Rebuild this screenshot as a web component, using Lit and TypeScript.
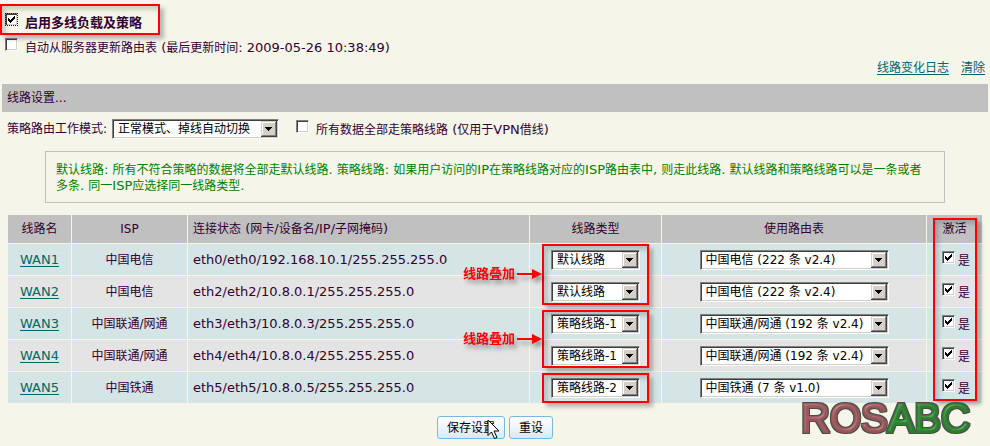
import { LitElement, html, css, svg } from "lit";
import { customElement, property } from "lit/decorators.js";

interface Route {
  name: string;
  isp: string;
  status: string;
  type: string;
  table: string;
}

const ROUTES: Route[] = [
  { name: "WAN1", isp: "中国电信", status: "eth0/eth0/192.168.10.1/255.255.255.0", type: "默认线路", table: "中国电信 (222 条 v2.4)" },
  { name: "WAN2", isp: "中国电信", status: "eth2/eth2/10.8.0.1/255.255.255.0", type: "默认线路", table: "中国电信 (222 条 v2.4)" },
  { name: "WAN3", isp: "中国联通/网通", status: "eth3/eth3/10.8.0.3/255.255.255.0", type: "策略线路-1", table: "中国联通/网通 (192 条 v2.4)" },
  { name: "WAN4", isp: "中国联通/网通", status: "eth4/eth4/10.8.0.4/255.255.255.0", type: "策略线路-1", table: "中国联通/网通 (192 条 v2.4)" },
  { name: "WAN5", isp: "中国铁通", status: "eth5/eth5/10.8.0.5/255.255.255.0", type: "策略线路-2", table: "中国铁通 (7 条 v1.0)" },
];

const TYPES = ["默认线路", "策略线路-1", "策略线路-2"];
const TABLES = ["中国电信 (222 条 v2.4)", "中国联通/网通 (192 条 v2.4)", "中国铁通 (7 条 v1.0)"];

// Latin runs are set one pixel larger than the Chinese text around them.
const mixed = (text: string) =>
  text.split(/([\x20-\x7e]+)/).map((part, i) => (i % 2 ? html`<span class="latin">${part}</span>` : part));

@customElement("classic-select")
export class ClassicSelect extends LitElement {
  @property({ type: Array }) options: string[] = [];
  @property() value = "";
  @property() label = "";

  static styles = css`
    :host {
      display: inline-block;
      position: relative;
      height: 20px;
      vertical-align: middle;
    }
    .field {
      display: block;
      box-sizing: border-box;
      width: 100%;
      height: 20px;
      margin: 0;
      padding: 0 18px 0 5px;
      appearance: none;
      border: 1px solid;
      border-color: #808080 #fff #fff #808080;
      border-radius: 0;
      box-shadow: inset 1px 1px #404040, inset -1px -1px #d4d0c8;
      background: #fff;
      color: #000;
      font: 12px/18px "DejaVu Sans", "Noto Sans CJK SC", sans-serif;
    }
    .arrow {
      position: absolute;
      top: 2px;
      right: 2px;
      width: 16px;
      height: 16px;
      pointer-events: none;
    }
  `;

  render() {
    return html`
      <select class="field" aria-label=${this.label}>
        ${this.options.map((o) => html`<option ?selected=${o === this.value}>${o}</option>`)}
      </select>
      <svg class="arrow" viewBox="0 0 16 16" shape-rendering="crispEdges" aria-hidden="true">
        <rect width="16" height="16" fill="#404040" />
        <rect width="15" height="15" fill="#d4d0c8" />
        <rect x="1" y="1" width="14" height="14" fill="#808080" />
        <rect x="1" y="1" width="13" height="13" fill="#fff" />
        <rect x="2" y="2" width="12" height="12" fill="#d4d0c8" />
        <path d="M4 6h7v1h-1v1h-1v1h-1v1h-1v-1h-1v-1h-1v-1h-1z" fill="#000" />
      </svg>
    `;
  }
}

@customElement("classic-check")
export class ClassicCheck extends LitElement {
  @property({ type: Boolean }) checked = false;
  @property({ type: Boolean }) focusmark = false;

  static styles = css`
    :host {
      display: inline-block;
    }
    .row {
      display: flex;
      gap: var(--check-gap, 7px);
    }
    .box {
      position: relative;
      width: 13px;
      height: 13px;
      flex: none;
    }
    .input {
      display: block;
      box-sizing: border-box;
      width: 13px;
      height: 13px;
      margin: 0;
      appearance: none;
      border: 1px solid;
      border-color: #808080 #fff #fff #808080;
      box-shadow: inset 1px 1px #404040, inset -1px -1px #d4d0c8;
      background: #fff;
    }
    .focus {
      outline: 1px dotted #330033;
      outline-offset: -1px;
    }
    .tick {
      position: absolute;
      inset: 0;
      visibility: hidden;
      pointer-events: none;
    }
    .input:checked + .tick {
      visibility: visible;
    }
    .text {
      padding-top: 2px;
      line-height: 16px;
    }
  `;

  render() {
    return html`
      <label class="row">
        <span class="box">
          <input class="input ${this.focusmark ? "focus" : ""}" type="checkbox" ?checked=${this.checked} />
          <svg class="tick" width="13" height="13" viewBox="0 0 13 13" shape-rendering="crispEdges" aria-hidden="true">
            <path d="M3 5h1v1h1v1h1v-1h1v-1h1v-1h1v-1h1v3h-1v1h-1v1h-1v1h-1v1h-1v-1h-1v-1h-1z" fill="#000" />
          </svg>
        </span>
        <span class="text"><slot></slot></span>
      </label>
    `;
  }
}

@customElement("app-root")
export class AppRoot extends LitElement {
  static styles = css`
    :host {
      display: block;
      position: relative;
      min-height: 100vh;
      box-sizing: border-box;
      background: #f6f5e9;
      color: #330033;
      font: 12px/16px "DejaVu Sans", "Noto Sans CJK SC", sans-serif;
      overflow: hidden;
    }
    .latin {
      font-size: 13px;
    }
    .link {
      color: #006666;
      text-decoration: underline;
      text-underline-offset: 2px;
    }
    .switches {
      display: flex;
      flex-direction: column;
      align-items: flex-start;
      gap: 7px;
      padding: 13px 5px 0;
    }
    .main-switch {
      font-weight: bold;
      height: 18px;
      font-size: 13px;
    }
    .actions {
      display: flex;
      justify-content: flex-end;
      gap: 12px;
      padding: 4px 5px 8px;
    }
    .heading {
      margin: 0 2px;
      padding: 0 5px;
      background: #c0c0c0;
      font-size: 12px;
      font-weight: normal;
      line-height: 28px;
    }
    .mode {
      display: flex;
      align-items: center;
      padding: 7px 7px 0;
    }
    .mode-label {
      width: 105px;
      white-space: nowrap;
    }
    .mode-select {
      width: 167px;
      margin-right: 17px;
    }
    .help {
      margin: 12px 45px 11px;
      padding: 10px 18px 8px 10px;
      border: 1px solid #c0c0c0;
      color: #008000;
      line-height: 15px;
    }
    .routes {
      position: relative;
      margin: 0 7px;
    }
    .table {
      width: 100%;
      table-layout: fixed;
      border-collapse: separate;
      border-spacing: 1px;
    }
    .col-name { width: 63px; }
    .col-isp { width: 115px; }
    .col-type { width: 131px; }
    .col-table { width: 264px; }
    .col-active { width: 55px; }
    .th {
      height: 28px;
      padding: 0;
      background: #c0c0c0;
      font-weight: normal;
      text-align: center;
    }
    .td {
      height: 31px;
      padding: 0;
      background: #d5e5e5;
      text-align: center;
      white-space: nowrap;
    }
    .tr:nth-child(even) .td {
      background: #e5e4e5;
    }
    .td.status, .th.status {
      padding-left: 5px;
      text-align: left;
    }
    .td.activate {
      padding-left: 3px;
    }
    .type-select {
      width: 89px;
    }
    .table-select {
      width: 189px;
    }
    .active {
      --check-gap: 3px;
      vertical-align: middle;
    }
    .buttons {
      display: flex;
      justify-content: center;
      gap: 4px;
      padding: 12px 0 7px;
    }
    .button {
      position: relative;
      height: 23px;
      padding: 0 9px;
      border: 1px solid #7ab8dc;
      border-radius: 3px;
      background: linear-gradient(#fff, #eef6ff 45%, #d3e9ff);
      color: #000;
      font: 12px/20px "DejaVu Sans", "Noto Sans CJK SC", sans-serif;
    }
    .cursor {
      position: absolute;
      left: 49px;
      top: 2px;
    }
    .mark {
      position: absolute;
      box-sizing: border-box;
      border: 2px solid #f00;
      box-shadow: 4px 4px 4px rgba(0, 0, 0, 0.25), inset 4px 4px 4px rgba(0, 0, 0, 0.16);
      pointer-events: none;
    }
    .mark-switch { left: 0; top: 4px; width: 160px; height: 31px; }
    .mark-type { right: 334px; width: 107px; }
    .mark-first { top: 30px; height: 61px; }
    .mark-second { top: 96px; height: 58px; }
    .mark-third { top: 159px; height: 30px; }
    .mark-active { right: 6px; top: 4px; width: 44px; height: 183px; }
    .note {
      position: absolute;
      right: 441px;
      display: flex;
      align-items: center;
      gap: 2px;
      color: #f00;
      font-size: 13px;
      font-weight: bold;
      filter: drop-shadow(3px 4px 2px rgba(0, 0, 0, 0.35));
    }
    .note-first { top: 52px; }
    .note-second { top: 117px; }
    .brand {
      position: absolute;
      right: 14px;
      top: 395px;
      width: 178px;
      height: 46px;
    }
    .brand-text {
      font: 40px "Liberation Sans", Arial, sans-serif;
    }
  `;

  private note(position: string) {
    return html`
      <div class="note ${position}">
        <span>线路叠加</span>
        <svg width="25" height="10" viewBox="0 0 25 10" aria-hidden="true">
          <path d="M0 5H16" stroke="#f00" stroke-width="2" />
          <path d="M15 0L25 5L15 10z" fill="#f00" />
        </svg>
      </div>
    `;
  }

  private row(r: Route) {
    return html`
      <tr class="tr">
        <td class="td"><a class="link" href="#${r.name}">${mixed(r.name)}</a></td>
        <td class="td">${r.isp}</td>
        <td class="td status">${mixed(r.status)}</td>
        <td class="td">
          <classic-select class="type-select" label="线路类型" .options=${TYPES} value=${r.type}></classic-select>
        </td>
        <td class="td">
          <classic-select class="table-select" label="使用路由表" .options=${TABLES} value=${r.table}></classic-select>
        </td>
        <td class="td activate"><classic-check class="active" checked>是</classic-check></td>
      </tr>
    `;
  }

  render() {
    return html`
      <div class="switches">
        <classic-check class="main-switch" checked focusmark>启用多线负载及策略</classic-check>
        <classic-check>${mixed("自动从服务器更新路由表 (最后更新时间: 2009-05-26 10:38:49)")}</classic-check>
      </div>
      <div class="mark mark-switch"></div>

      <nav class="actions">
        <a class="link" href="#log">线路变化日志</a>
        <a class="link" href="#clear">清除</a>
      </nav>

      <h2 class="heading">线路设置...</h2>
      <div class="mode">
        <span class="mode-label">策略路由工作模式:</span>
        <classic-select
          class="mode-select"
          label="策略路由工作模式"
          .options=${["正常模式、掉线自动切换"]}
          value="正常模式、掉线自动切换"
        ></classic-select>
        <classic-check>${mixed("所有数据全部走策略线路 (仅用于VPN借线)")}</classic-check>
      </div>
      <div class="help">
        ${mixed(
          "默认线路: 所有不符合策略的数据将全部走默认线路. 策略线路: 如果用户访问的IP在策略线路对应的ISP路由表中, 则走此线路. 默认线路和策略线路可以是一条或者"
        )}${mixed("多条. 同一ISP应选择同一线路类型.")}
      </div>

      <div class="routes">
        <table class="table">
          <colgroup>
            <col class="col-name" />
            <col class="col-isp" />
            <col />
            <col class="col-type" />
            <col class="col-table" />
            <col class="col-active" />
          </colgroup>
          <thead>
            <tr>
              <th class="th">线路名</th>
              <th class="th">ISP</th>
              <th class="th status">${mixed("连接状态 (网卡/设备名/IP/子网掩码)")}</th>
              <th class="th">线路类型</th>
              <th class="th">使用路由表</th>
              <th class="th">激活</th>
            </tr>
          </thead>
          <tbody>
            ${ROUTES.map((r) => this.row(r))}
          </tbody>
        </table>
        <div class="mark mark-type mark-first"></div>
        <div class="mark mark-type mark-second"></div>
        <div class="mark mark-type mark-third"></div>
        <div class="mark mark-active"></div>
        ${this.note("note-first")} ${this.note("note-second")}
      </div>

      <div class="buttons">
        <button class="button" type="button">
          保存设置
          <svg class="cursor" width="13" height="21" viewBox="0 0 13 21" aria-hidden="true">
            <path
              d="M1 1V16.500L4.500 13L7.500 19.500L10 18.500L7 12H12z"
              fill="#fff"
              stroke="#000"
            />
          </svg>
        </button>
        <button class="button" type="button">重设</button>
      </div>

      <svg class="brand" viewBox="0 0 178 46" role="img" aria-label="ROSABC">
        <defs>
          <filter id="bevel" x="-5%" y="-10%" width="110%" height="125%" color-interpolation-filters="sRGB">
            <feMorphology in="SourceAlpha" operator="dilate" radius="1" result="wide" />
            <feGaussianBlur in="wide" stdDeviation="0.4" result="edge" />
            <feFlood flood-color="#4a4f4a" />
            <feComposite in2="edge" operator="in" result="outline" />
            <feGaussianBlur in="SourceAlpha" stdDeviation="1" result="soft" />
            <feSpecularLighting in="soft" surfaceScale="2" specularConstant="0.5" specularExponent="16" lighting-color="#fff" result="shine">
              <feDistantLight azimuth="235" elevation="40" />
            </feSpecularLighting>
            <feComposite in="shine" in2="SourceAlpha" operator="in" result="lit" />
            <feComposite in="SourceGraphic" in2="lit" operator="arithmetic" k2="1" k3="0.4" result="face" />
            <feMerge>
              <feMergeNode in="outline" />
              <feMergeNode in="face" />
            </feMerge>
          </filter>
        </defs>
        ${svg`
          <text class="brand-text" x="3" y="37" filter="url(#bevel)" stroke-width="2">
            <tspan fill="#96565a" stroke="#96565a">ROS</tspan><tspan fill="#2f7d33" stroke="#2f7d33">ABC</tspan>
          </text>
        `}
      </svg>
    `;
  }
}
